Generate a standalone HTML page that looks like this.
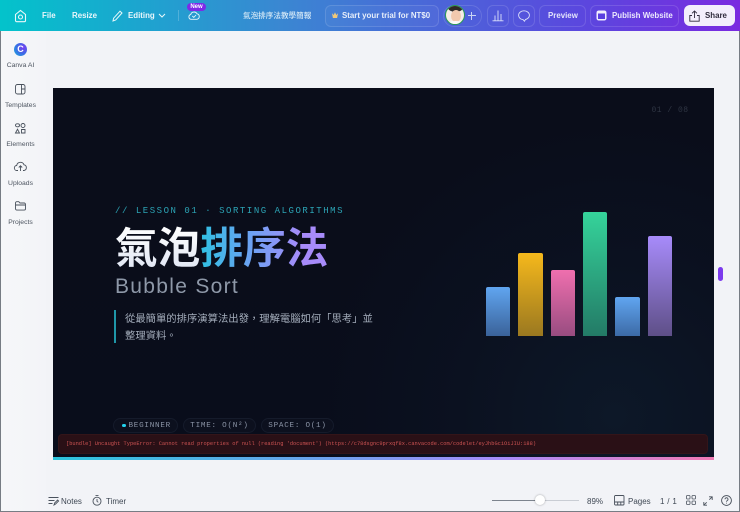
<!DOCTYPE html>
<html><head><meta charset="utf-8"><style>
*{box-sizing:border-box;margin:0;padding:0}
html,body{width:740px;height:512px;overflow:hidden;background:#f2f3f7}
body{font-family:"Liberation Sans","Noto Sans CJK TC",sans-serif;position:relative}
.wrap{position:absolute;left:0;top:0;width:740px;height:512px;filter:blur(.3px)}
.a{position:absolute;white-space:nowrap}
.top{left:0;top:0;width:740px;height:31px;background:linear-gradient(90deg,#03c3cb 0%,#1ba6cf 18%,#3a87d2 38%,#4a67d8 58%,#5a48de 78%,#7a2ae0 100%)}
.t{color:#eaf6fb;font-size:7.9px;font-weight:700;line-height:12px}
.tb{border:1px solid rgba(255,255,255,.13);border-radius:6px;height:22px;top:5px}
.side{left:0;top:31px;width:46px;height:481px;background:linear-gradient(90deg,#f6f7f9,#f3f4f8)}
.sl{left:0;width:41px;text-align:center;font-size:6.8px;color:#4d5560;line-height:9px}
svg{position:absolute;overflow:visible}
.slide{left:53px;top:88px;width:661px;height:372px;background:radial-gradient(circle at 85% 88%,#0d1828 0,#0b1120 24%,rgba(9,12,24,0) 45%),linear-gradient(180deg,#0a0d1a,#090d1b);overflow:hidden}
.mono{font-family:"Liberation Mono",monospace}
.bar{position:absolute;width:24.4px;bottom:124.3px;border-radius:2px 2px 0 0}
.chip{top:330px;height:15px;border:1px solid #151b2b;border-radius:8px;background:#0c101e;color:#8a93a5;font-family:"Liberation Mono",monospace;font-size:7.6px;letter-spacing:.75px;line-height:15px;text-align:center;position:absolute}
.b{color:#3f4854;font-size:8px;line-height:11px}
</style></head><body><div class="wrap">

<div class="a top"></div>
<svg style="left:14px;top:9px" width="13" height="14" viewBox="0 0 13 14" fill="none" stroke="#e8f8fa" stroke-width="1.1"><path d="M1.500 5.500 6.500 1.500l5 4v6a1.200 1.200 0 0 1-1.200 1.200H2.700a1.200 1.200 0 0 1-1.200-1.200z"/><circle cx="6.500" cy="8" r="2"/></svg>
<div class="a t" style="left:42px;top:10px">File</div>
<div class="a t" style="left:72px;top:10px">Resize</div>
<svg style="left:112px;top:10px" width="11" height="12" viewBox="0 0 11 12" fill="none" stroke="#e8f8fa" stroke-width="1"><path d="M1 11l.6-2.800L8 1.200l2 1.800-6.300 7z"/></svg>
<div class="a t" style="left:128px;top:10px">Editing</div>
<svg style="left:158px;top:13px" width="8" height="5" viewBox="0 0 8 5" fill="none" stroke="#e8f8fa" stroke-width="1"><path d="M1 1l3 3 3-3"/></svg>
<div class="a" style="left:178px;top:10px;width:1px;height:11px;background:rgba(255,255,255,.2)"></div>
<svg style="left:188px;top:10px" width="12" height="10" viewBox="0 0 12 10" fill="none" stroke="#e8f8fa" stroke-width=".9"><path d="M3 9.300a2.400 2.400 0 0 1-.3-4.700A3.400 3.400 0 0 1 9 3.800a2.800 2.800 0 0 1 0 5.500zM4.300 6l1.500 1.400L8 5"/></svg>
<div class="a" style="left:187px;top:3px;width:19px;height:8px;border-radius:4px;background:#7d2ae8;color:#fff;font-size:6px;font-weight:700;line-height:8px;text-align:center">New</div>
<div class="a" style="left:243px;top:10px;color:#d7eaf7;font-size:7.600px;line-height:12px;font-weight:500">氣泡排序法教學簡報</div>
<div class="a tb" style="left:325px;width:114px;background:rgba(255,255,255,.03)"></div>
<div class="a" style="left:332px;top:12px;width:6px;height:6px;background:#f1c879;clip-path:polygon(0 20%,28% 50%,50% 5%,72% 50%,100% 20%,85% 100%,15% 100%)"></div>
<div class="a t" style="left:342px;top:10px;color:#e7eefa">Start your trial for NT$0</div>
<div class="a tb" style="left:443px;width:39px;border-radius:11px"></div>
<div class="a" style="left:445px;top:5px;width:20px;height:20px;border-radius:50%;border:1px solid #2a9a56;background:#f4ece6;overflow:hidden"><div style="position:absolute;left:2px;top:-3px;width:15px;height:9px;border-radius:50%;background:#2e2a28"></div><div style="position:absolute;left:4.500px;top:4px;width:10px;height:12px;border-radius:50%;background:#f2c9ae"></div><div style="position:absolute;left:1px;top:15px;width:17px;height:6px;background:#fafafa;border-radius:50%"></div></div>
<div class="a" style="left:467.500px;top:13px;width:8px;height:1.200px;background:#c9d3f4;margin-top:2px"></div>
<div class="a" style="left:471px;top:12px;width:1.200px;height:8px;background:#c9d3f4"></div>
<div class="a tb" style="left:487px;width:22px"></div>
<svg style="left:492px;top:9px" width="12" height="13" viewBox="0 0 12 13" fill="none" stroke="#dbe0fa" stroke-width=".9"><path d="M.5 11.800h11M3 11.800V6.500M6 11.800V1.500M9 11.800V5"/></svg>
<div class="a tb" style="left:513px;width:22px"></div>
<svg style="left:518px;top:10px" width="12" height="12" viewBox="0 0 12 12" fill="none" stroke="#dbe0fa" stroke-width=".9"><path d="M6 .8C2.900.8.600 2.800.600 5.200s2.100 4.300 4.400 4.400L6.500 11.200l.9-1.700c2.300-.4 4-2.200 4-4.300C11.400 2.800 9.100.8 6 .8z"/></svg>
<div class="a tb" style="left:539px;width:47px"></div>
<div class="a t" style="left:548px;top:10px;color:#e3e4fb">Preview</div>
<div class="a tb" style="left:590px;width:89px"></div>
<svg style="left:596px;top:10px" width="11" height="11" viewBox="0 0 11 11"><rect x=".5" y=".5" width="10" height="10" rx="2.200" fill="#f1eefd"/><rect x="2" y="3.500" width="7" height="5.500" fill="#5a3fe0"/></svg>
<div class="a t" style="left:612px;top:10px;color:#ece9fd">Publish Website</div>
<div class="a" style="left:684px;top:5px;width:51px;height:21px;border-radius:6px;background:#f3eefc"></div>
<svg style="left:689px;top:10px" width="11" height="12" viewBox="0 0 11 12" fill="none" stroke="#2f2b3c" stroke-width=".9"><path d="M5.500 8V1M3 3.300 5.500 1 8 3.300M3 5.500H.8v5.700h9.400V5.500H8"/></svg>
<div class="a t" style="left:705px;top:10px;color:#2f2b3c;font-weight:700">Share</div>

<div class="a side"></div>
<div class="a" style="left:14px;top:43px;width:13px;height:13px;border-radius:50%;background:radial-gradient(circle at 70% 35%,#7a3cf0 0,#3c6ce6 50%,#12b6d8 100%);color:#fff;font-size:9px;font-weight:700;line-height:13px;text-align:center">C</div>
<div class="a sl" style="top:61px">Canva AI</div>
<svg style="left:15px;top:84px" width="11" height="11" viewBox="0 0 11 11" fill="none" stroke="#49515c" stroke-width=".9"><rect x=".5" y=".5" width="9.500" height="9.500" rx="2"/><path d="M6.500.5v9.500M6.500 5h3.500"/></svg>
<div class="a sl" style="top:100.500px">Templates</div>
<svg style="left:15px;top:123px" width="11" height="11" viewBox="0 0 11 11" fill="none" stroke="#49515c" stroke-width=".9"><rect x=".5" y=".8" width="4" height="3" rx="1.500"/><circle cx="8" cy="2.500" r="2"/><path d="M.5 10l2-3.800L4.500 10zM6.500 6.500h3.500v3.500h-3.500z"/></svg>
<div class="a sl" style="top:139.500px">Elements</div>
<svg style="left:14px;top:161px" width="13" height="11" viewBox="0 0 13 11" fill="none" stroke="#49515c" stroke-width=".9"><path d="M4 9.500H3a2.500 2.500 0 0 1-.3-5A3.800 3.800 0 0 1 10 3.800a2.900 2.900 0 0 1 0 5.700H9M6.500 10V5M4.800 6.500 6.500 4.800 8.200 6.500"/></svg>
<div class="a sl" style="top:178.500px">Uploads</div>
<svg style="left:15px;top:201px" width="11" height="10" viewBox="0 0 11 10" fill="none" stroke="#49515c" stroke-width=".9"><path d="M.5 2a1.300 1.300 0 0 1 1.300-1.300h2l1.200 1.300h4.200a1.300 1.300 0 0 1 1.300 1.300v4.500a1.300 1.300 0 0 1-1.300 1.300H1.800A1.300 1.300 0 0 1 .5 7.800zM.5 4h9.500"/></svg>
<div class="a sl" style="top:217.500px">Projects</div>

<div class="a slide">
  <div class="a mono" style="left:598.500px;top:17px;color:#2f3543;font-size:8px;letter-spacing:.5px;line-height:11px">01 / 08</div>
  <div class="a mono" style="left:62px;top:117.500px;color:#2ca3b4;font-size:9px;letter-spacing:1.540px;line-height:11px">// LESSON 01 · SORTING ALGORITHMS</div>
  <div class="a" style="left:62px;top:132px;font-size:42.700px;font-weight:700;line-height:58px;font-family:'Liberation Sans','Noto Sans CJK TC',sans-serif"><span style="background:linear-gradient(180deg,#fff,#dfe5f3);-webkit-background-clip:text;background-clip:text;color:transparent">氣泡</span><span style="background:linear-gradient(90deg,#2fc0e2,#6aa3f2 38%,#a78bfa 80%);-webkit-background-clip:text;background-clip:text;color:transparent">排序法</span></div>
  <div class="a" style="left:62px;top:186px;color:#8e98a8;font-size:21px;letter-spacing:1.300px;line-height:26px">Bubble Sort</div>
  <div class="a" style="left:61px;top:222px;width:2px;height:33px;background:#1f96a8"></div>
  <div class="a" style="left:72px;top:223px;color:#a4adbb;font-size:10.340px;line-height:17px;white-space:normal;width:252px">從最簡單的排序演算法出發，理解電腦如何「思考」並<br>整理資料。</div>

  <div class="bar" style="left:433px;height:48.400px;background:linear-gradient(#60a5f0,#3a6299)"></div>
  <div class="bar" style="left:465.300px;height:83px;background:linear-gradient(#f5b81c,#9a7820)"></div>
  <div class="bar" style="left:497.700px;height:65.700px;background:linear-gradient(#ef6fae,#984c80)"></div>
  <div class="bar" style="left:530px;height:124px;background:linear-gradient(#35d39a,#237a66)"></div>
  <div class="bar" style="left:562.300px;height:38.400px;background:linear-gradient(#60a5f0,#3c6aa6)"></div>
  <div class="bar" style="left:595px;height:100px;background:linear-gradient(#a78bfa,#5e4f87)"></div>

  <div class="chip" style="left:60px;width:65px;text-align:left;padding-left:14.500px">BEGINNER</div>
  <div class="a" style="left:69px;top:335.500px;width:3.500px;height:3.500px;border-radius:50%;background:#22d3ee"></div>
  <div class="chip" style="left:130px;width:73px">TIME: O(N²)</div>
  <div class="chip" style="left:208px;width:73px">SPACE: O(1)</div>

  <div class="a" style="left:5px;top:346px;width:650px;height:20px;border-radius:4px;background:#2a1016;border:1px solid #331519"></div>
  <div class="a mono" style="left:13px;top:351.500px;color:#cc5252;font-size:5.340px;line-height:9px">[bundle] Uncaught TypeError: Cannot read properties of null (reading 'document') (https://c78dsgnc9prxqf8x.canvacode.com/codelet/eyJhbGciOiJIU:188)</div>
  <div class="a" style="left:0;top:369px;width:661px;height:3px;background:linear-gradient(90deg,#2cc4dc,#6aa2ec 40%,#a78bfa 68%,#f07ab4)"></div>
</div>

<div class="a" style="left:718px;top:267px;width:5px;height:14px;border-radius:2.500px;background:#7c3aed"></div>

<svg style="left:48px;top:496px" width="11" height="10" viewBox="0 0 11 10" fill="none" stroke="#4a525d" stroke-width=".9"><path d="M.5 1.500h10M.5 4.500h6M.5 7.500h4M6 9l.6-2 3-3 1 1-3 3z"/></svg>
<div class="a b" style="left:61px;top:495.500px">Notes</div>
<svg style="left:92px;top:495px" width="10" height="11" viewBox="0 0 10 11" fill="none" stroke="#4a525d" stroke-width=".9"><circle cx="5" cy="6.200" r="4"/><path d="M3.500.6h3M5 4v2.300l1.300 1"/></svg>
<div class="a b" style="left:106px;top:495.500px">Timer</div>
<div class="a" style="left:492px;top:500px;width:47px;height:1px;background:#7d848e"></div>
<div class="a" style="left:539px;top:500px;width:40px;height:1px;background:#c9cdd4"></div>
<div class="a" style="left:535px;top:495px;width:10px;height:10px;border-radius:50%;background:#fff;box-shadow:0 0 2px rgba(0,0,0,.35)"></div>
<div class="a b" style="left:587px;top:495.500px">89%</div>
<svg style="left:614px;top:495px" width="11" height="11" viewBox="0 0 11 11" fill="none" stroke="#4a525d" stroke-width=".9"><rect x=".5" y=".5" width="9.500" height="9.500" rx="1"/><path d="M.5 7h9.500M3.700 7v3M6.800 7v3"/></svg>
<div class="a b" style="left:628px;top:495.500px">Pages</div>
<div class="a b" style="left:660px;top:495.500px;letter-spacing:.3px">1 / 1</div>
<svg style="left:686px;top:495px" width="10" height="10" viewBox="0 0 10 10" fill="none" stroke="#4a525d" stroke-width=".8"><rect x=".5" y=".5" width="3.500" height="3.500" rx=".8"/><rect x="6" y=".5" width="3.500" height="3.500" rx=".8"/><rect x=".5" y="6" width="3.500" height="3.500" rx=".8"/><rect x="6" y="6" width="3.500" height="3.500" rx=".8"/></svg>
<svg style="left:703px;top:496px" width="10" height="10" viewBox="0 0 10 10" fill="none" stroke="#4a525d" stroke-width=".9"><path d="M6 .8h3.200V4M9.200.8 6.300 3.700M4 9.200H.8V6M.8 9.200l2.900-2.900"/></svg>
<svg style="left:721px;top:495px" width="11" height="11" viewBox="0 0 11 11" fill="none" stroke="#4a525d" stroke-width=".9"><circle cx="5.500" cy="5.500" r="4.900"/><path d="M4 4.300a1.500 1.500 0 1 1 2.200 1.300c-.5.300-.7.600-.7 1.200M5.500 7.700v.8"/></svg>

<div class="a" style="left:0;top:31px;width:1px;height:481px;background:#777c84"></div>
<div class="a" style="left:739px;top:31px;width:1px;height:481px;background:#777c84"></div>
<div class="a" style="left:0;top:511px;width:740px;height:1px;background:#777c84"></div>
</div></body></html>
